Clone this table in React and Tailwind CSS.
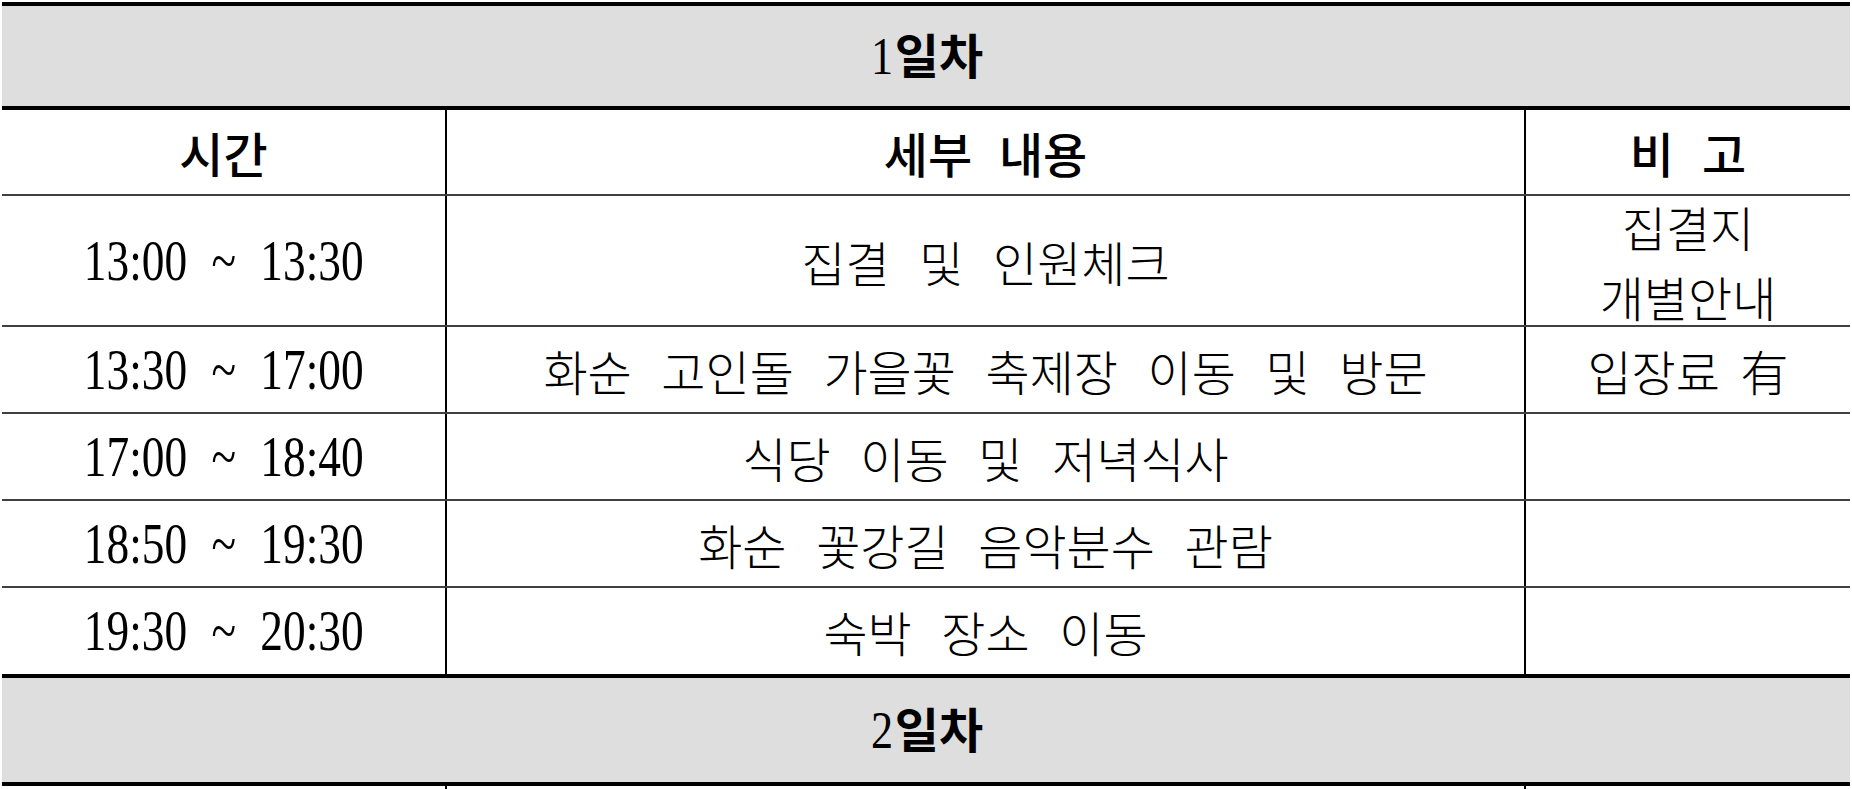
import React from "react";

const ko = "font-['Noto_Sans_CJK_KR',sans-serif]";
const num = "font-['Liberation_Serif','Noto_Sans_CJK_KR',serif]";

const rows = [
  { t: "13:00 ~ 13:30", c: "집결 및 인원체크", n: ["집결지", "개별안내"], h: "h-[131px]" },
  { t: "13:30 ~ 17:00", c: "화순 고인돌 가을꽃 축제장 이동 및 방문", n: ["입장료 有"], h: "h-[87px]" },
  { t: "17:00 ~ 18:40", c: "식당 이동 및 저녁식사", n: [], h: "h-[87px]" },
  { t: "18:50 ~ 19:30", c: "화순 꽃강길 음악분수 관람", n: [], h: "h-[87px]" },
  { t: "19:30 ~ 20:30", c: "숙박 장소 이동", n: [], h: "h-[86px]", last: true },
];

function DayBand({ d, h }) {
  return (
    <div className={`${h} border-y-4 border-black bg-[#dedede] flex items-center justify-center`}>
      <span className="leading-none text-black whitespace-nowrap">
        <span className="font-['Liberation_Serif',serif] text-[52px] inline-block scale-x-[0.85]">{d}</span>
        <span className={`${ko} text-[48px] font-bold`}>일차</span>
      </span>
    </div>
  );
}

function Row({ children, h, last }) {
  return (
    <div className={`flex ${h} ${last ? "" : "border-b-2 border-[#404040]"}`}>{children}</div>
  );
}

export default function App() {
  return (
    <div className="bg-white w-[1852px] h-[789px] overflow-hidden pt-[2px] pl-[2px]">
      <div className="w-[1848px] text-black">
        <DayBand d="1" h="h-[108px]" />
        <Row h="h-[86px]">
          <div className="w-[445px] border-r-2 border-black flex items-center justify-center">
            <span className={`${ko} text-[48px] font-medium leading-none`}>시간</span>
          </div>
          <div className="w-[1079px] border-r-2 border-black flex items-center justify-center">
            <span className={`${ko} text-[48px] font-medium leading-none [word-spacing:16px]`}>세부 내용</span>
          </div>
          <div className="flex-1 flex items-center justify-center">
            <span className={`${ko} text-[48px] font-medium leading-none tracking-[28px] pl-[28px]`}>비고</span>
          </div>
        </Row>
        {rows.map((r, i) => (
          <Row key={i} h={r.h} last={r.last}>
            <div className="w-[445px] border-r-2 border-black flex items-center justify-center">
              <span className={`${num} text-[56px] leading-none inline-block scale-x-[0.81] [word-spacing:16px] whitespace-nowrap`}>
                {r.t}
              </span>
            </div>
            <div className="w-[1079px] border-r-2 border-black flex items-center justify-center">
              <span className={`${ko} text-[48px] font-light leading-none inline-block whitespace-nowrap [word-spacing:19px]`}>
                {r.c}
              </span>
            </div>
            <div className="flex-1 flex flex-col items-center justify-center">
              {r.n.map((line, j) => (
                <div key={j} className={`${ko} text-[48px] font-light leading-[70px] whitespace-nowrap [word-spacing:10px]`}>
                  {line}
                </div>
              ))}
            </div>
          </Row>
        ))}
        <DayBand d="2" h="h-[112px]" />
        <div className="flex h-[20px]">
          <div className="w-[445px] border-r-2 border-black" />
          <div className="w-[1079px] border-r-2 border-black" />
          <div className="flex-1" />
        </div>
      </div>
    </div>
  );
}
